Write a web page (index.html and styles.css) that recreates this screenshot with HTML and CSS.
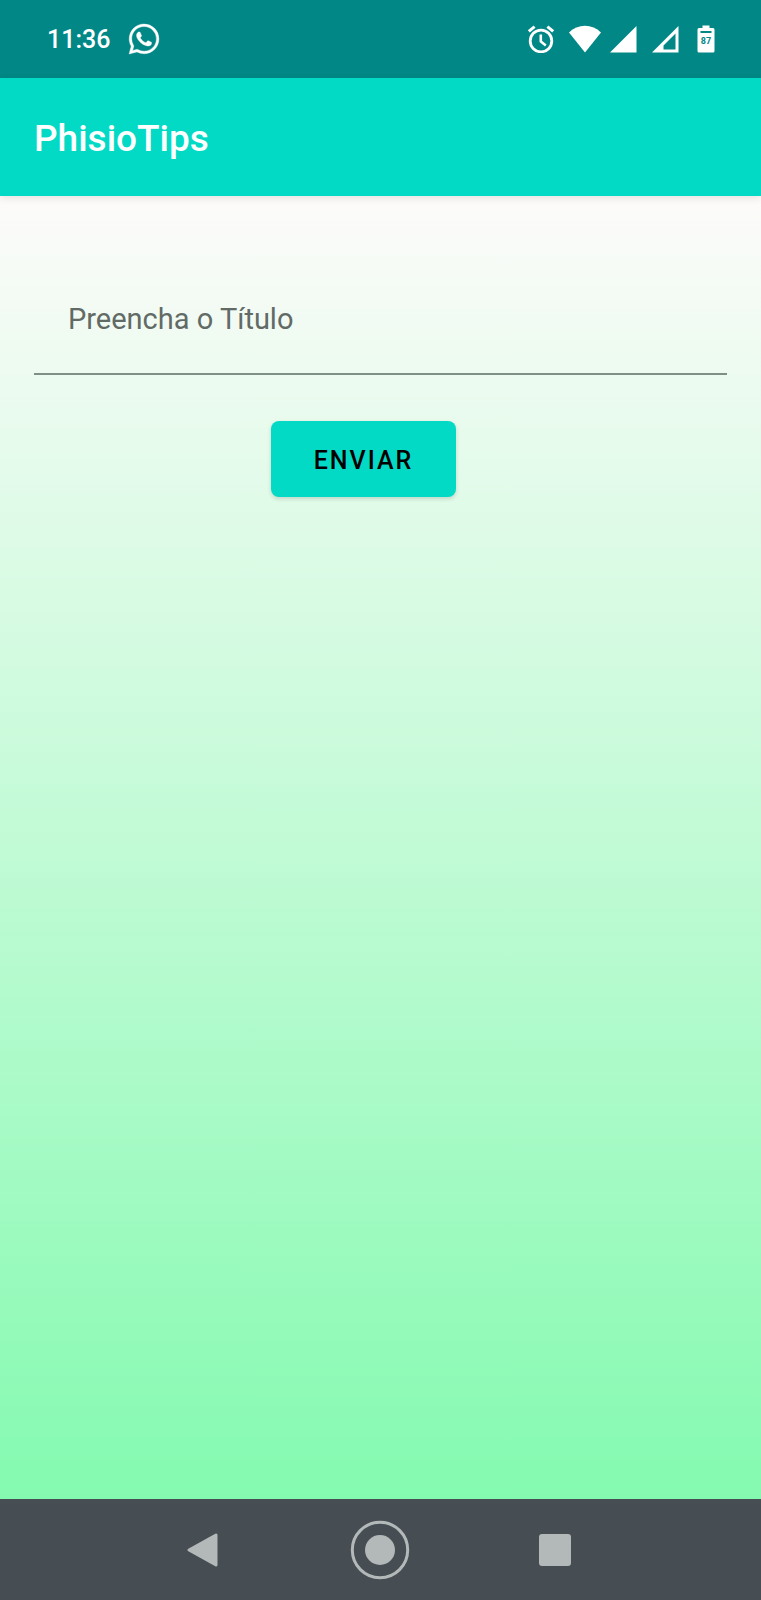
FILE: index.html
```html
<!DOCTYPE html>
<html lang="pt">
<head>
<meta charset="utf-8">
<meta name="viewport" content="width=device-width, initial-scale=1">
<title>PhisioTips</title>
<link rel="stylesheet" href="styles.css">
</head>
<body class="screen">
<div class="status-bar">
  <div class="status-left">
    <time class="clock">11:36</time>
    <svg class="icon-chat" viewBox="0 0 24 24" aria-hidden="true"><path fill="currentColor" stroke="currentColor" stroke-width=".3" d="M17.472 14.382c-.297-.149-1.758-.867-2.03-.967-.273-.099-.471-.148-.67.15-.197.297-.767.966-.94 1.164-.173.199-.347.223-.644.075-.297-.15-1.255-.463-2.39-1.475-.883-.788-1.48-1.761-1.653-2.059-.173-.297-.018-.458.13-.606.134-.133.298-.347.446-.52.149-.174.198-.298.298-.497.099-.198.05-.371-.025-.52-.075-.149-.669-1.612-.916-2.207-.242-.579-.487-.5-.669-.51-.173-.008-.371-.01-.57-.01-.198 0-.52.074-.792.372-.272.297-1.04 1.016-1.04 2.479 0 1.462 1.065 2.875 1.213 3.074.149.198 2.096 3.2 5.077 4.487.709.306 1.262.489 1.694.625.712.227 1.36.195 1.871.118.571-.085 1.758-.719 2.006-1.413.248-.694.248-1.289.173-1.413-.074-.124-.272-.198-.57-.347m-5.421 7.403h-.004a9.87 9.87 0 0 1-5.031-1.378l-.361-.214-3.741.982.998-3.648-.235-.374a9.86 9.86 0 0 1-1.51-5.26c.001-5.45 4.436-9.884 9.888-9.884 2.64 0 5.122 1.03 6.988 2.898a9.825 9.825 0 0 1 2.893 6.994c-.003 5.45-4.437 9.884-9.885 9.884m8.413-18.297A11.815 11.815 0 0 0 12.05 0C5.495 0 .16 5.335.157 11.892c0 2.096.547 4.142 1.588 5.945L.057 24l6.305-1.654a11.882 11.882 0 0 0 5.683 1.448h.005c6.554 0 11.89-5.335 11.893-11.893a11.821 11.821 0 0 0-3.48-8.413z"/></svg>
  </div>
  <div class="status-right">
    <svg class="icon-alarm" viewBox="0 0 28 28" aria-hidden="true"><g fill="none" stroke="currentColor"><circle cx="14" cy="16" r="10.8" stroke-width="2.8"/><path d="M13.8 9.5v7l5 4" stroke-width="2.6"/><path d="M1.8 6.4 7.6 1.6M26.2 6.4 20.4 1.6" stroke-width="3"/></g></svg>
    <svg class="icon-wifi" viewBox="0 0 32 28" aria-hidden="true"><path fill="currentColor" d="M16 27.5 0 7.5C4.5 3 10 .8 16 .8S27.5 3 32 7.5z"/></svg>
    <svg class="icon-signal" viewBox="0 0 28 28" aria-hidden="true"><path fill="currentColor" d="M1 27.5 27.5 1v26.5z"/></svg>
    <svg class="icon-signal" viewBox="0 0 28 28" aria-hidden="true"><path fill="currentColor" fill-rule="evenodd" d="M1 27.5 27.5 1v26.5zM12.500 24.500h12V8.500l-12 12z"/></svg>
    <svg class="icon-battery" viewBox="0 0 18 28" role="img" aria-label="87%"><path fill="currentColor" d="M5.5 .5h7V3H16q1.500 0 1.500 1.500v21.500q0 1.500-1.500 1.500H2q-1.500 0-1.500-1.500V4.500Q.5 3 2 3h3.500z"/><path class="battery-gap" d="M3.500 6h11v2h-11z"/><text class="battery-level" x="9" y="19" text-anchor="middle">87</text></svg>
  </div>
</div>
<header class="app-bar"><h1 class="app-title">PhisioTips</h1></header>
<main class="content">
  <form class="tip-form">
    <input class="title-field" type="text" aria-label="Preencha o Título" placeholder="Preencha o Título">
    <button class="send-button" type="button">ENVIAR</button>
  </form>
</main>
<nav class="nav-bar">
  <button class="nav-button" type="button" aria-label="Voltar"><svg class="nav-icon" viewBox="0 0 60 60" aria-hidden="true"><path d="M14 30 41 15v30z" fill="currentColor" stroke="currentColor" stroke-width="3" stroke-linejoin="round"/></svg></button>
  <button class="nav-button" type="button" aria-label="Início"><svg class="nav-icon" viewBox="0 0 60 60" aria-hidden="true"><circle cx="30" cy="30" r="27.7" fill="none" stroke="currentColor" stroke-width="3"/><circle cx="30" cy="30" r="15" fill="currentColor"/></svg></button>
  <button class="nav-button" type="button" aria-label="Recentes"><svg class="nav-icon" viewBox="0 0 60 60" aria-hidden="true"><rect x="13" y="14" width="32" height="32" rx="3" fill="currentColor"/></svg></button>
</nav>
</body>
</html>
```
FILE: styles.css
```css
* {
  box-sizing: border-box;
}

.screen {
  display: flex;
  flex-direction: column;
  min-height: 100vh;
  margin: 0;
  font-family: Roboto, "Liberation Sans", sans-serif;
}

.status-bar {
  display: flex;
  justify-content: space-between;
  align-items: center;
  height: 78px;
  padding: 0 46px 0 47px;
  background: #018786;
  color: #fff;
}

.status-left,
.status-right {
  display: flex;
  align-items: center;
}

.status-left {
  gap: 19px;
}

.status-right {
  gap: 14px;
}

.clock {
  padding-top: 2px;
  font-size: 25px;
  font-weight: 500;
  line-height: 32px;
}

.icon-chat {
  width: 30px;
  height: 30px;
  overflow: visible;
}

.icon-alarm,
.icon-signal {
  width: 28px;
  height: 28px;
}

.icon-wifi {
  width: 32px;
  height: 28px;
}

.icon-signal {
  margin-left: -6px;
}

.icon-signal + .icon-signal {
  margin-left: 0;
}

.icon-battery {
  width: 18px;
  height: 28px;
  margin-left: 4px;
}

.battery-gap {
  fill: #018786;
}

.battery-level {
  fill: #018786;
  font-size: 9px;
  font-weight: 700;
}

.app-bar {
  display: flex;
  align-items: center;
  height: 118px;
  padding: 4px 34px 0;
  background: #03dac5;
  box-shadow: 0 2px 8px rgba(0, 0, 0, 0.1);
  z-index: 1;
}

.app-title {
  margin: 0;
  color: #fff;
  font-size: 37px;
  font-weight: 500;
  line-height: 44px;
}

.content {
  flex: 1;
  padding: 70px 34px;
  background: linear-gradient(#fdfbfa, #84fab0);
}

.tip-form {
  display: flex;
  flex-direction: column;
  align-items: center;
}

.title-field {
  width: 100%;
  height: 109px;
  padding: 0 34px 2px;
  border: 0;
  border-bottom: 2px solid #7f8f86;
  background: transparent;
  color: #202020;
  font-family: inherit;
  font-size: 29px;
  outline: 0;
}

.title-field::placeholder {
  color: #626a66;
  opacity: 1;
}

.send-button {
  margin: 46px 34px 0 0;
  padding: 2px 43px 0;
  height: 76px;
  border: 0;
  border-radius: 8px;
  background: #03dac5;
  box-shadow: 0 2px 4px rgba(0, 0, 0, 0.14);
  color: #000;
  font-family: inherit;
  font-size: 25px;
  font-weight: 500;
  letter-spacing: 2px;
}

.nav-bar {
  display: grid;
  grid-template-columns: repeat(3, 1fr);
  align-items: center;
  height: 101px;
  padding: 0 117px;
  background: #464d53;
}

.nav-button {
  display: flex;
  justify-content: center;
  padding: 0;
  border: 0;
  background: none;
  color: #b3b8b9;
}

.nav-icon {
  width: 60px;
  height: 60px;
}
```
